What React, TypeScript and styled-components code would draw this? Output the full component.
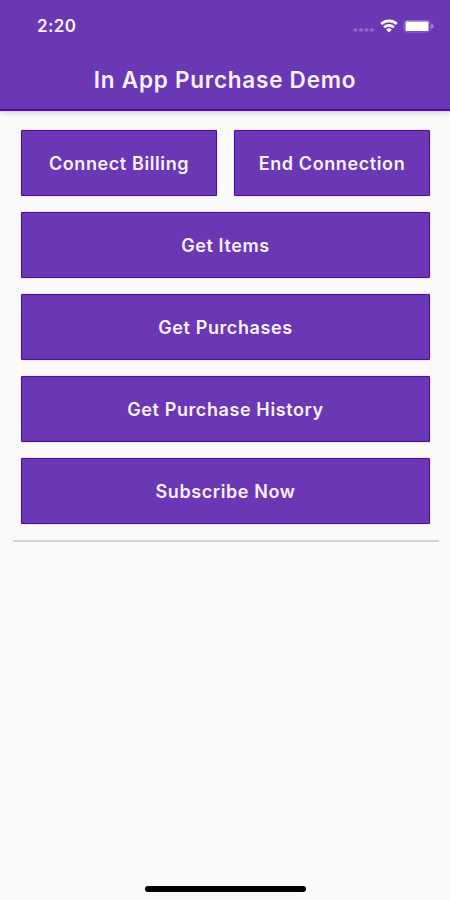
import React from "react";
import styled, { createGlobalStyle } from "styled-components";

const GlobalStyle = createGlobalStyle`
  * { box-sizing: border-box; }
  body { margin: 0; background: #fafafa; }
`;

const Screen = styled.div`
  width: 450px;
  height: 900px;
  display: flex;
  flex-direction: column;
  overflow: hidden;
  background: #fafafa;
  font-family: Inter, "Liberation Sans", sans-serif;
  color: #f8f0ff;
`;

const Header = styled.header`
  height: 111px;
  flex: none;
  background: #6a38b5;
  border-bottom: 2px solid #5409a4;
  box-shadow: 0 1px 1px #e4d2f5, 0 2px 6px rgba(0, 0, 0, 0.15);
`;

const StatusBar = styled.div`
  height: 52px;
  padding: 0 16px 0 37px;
  display: flex;
  align-items: center;
  justify-content: space-between;
`;

const Time = styled.span`
  font-size: 17px;
  line-height: 20px;
  font-weight: 600;
  letter-spacing: 0.4px;
`;

const StatusIcons = styled.svg`
  display: block;
  width: 81px;
  height: 18px;
`;

const Title = styled.h1`
  margin: 0;
  height: 56px;
  line-height: 56px;
  text-align: center;
  font-size: 22.5px;
  font-weight: 600;
  letter-spacing: 0.76px;
`;

const Actions = styled.main`
  display: grid;
  grid-template-columns: 1fr 1fr;
  grid-auto-rows: 66px;
  gap: 16px 17px;
  padding: 19px 20px 0 21px;
`;

const ActionButton = styled.button<{ $wide?: boolean }>`
  grid-column: ${({ $wide }) => ($wide ? "1 / -1" : "auto")};
  padding: 0;
  border: 1px solid #5409a4;
  border-radius: 1px;
  background: #6a38b5;
  box-shadow: 0 0 1px #8a55c8;
  color: inherit;
  font-family: inherit;
  font-size: 18px;
  font-weight: 600;
  letter-spacing: 0.6px;
`;

const Divider = styled.hr`
  flex: none;
  width: 426px;
  height: 2px;
  margin: 16px 0 0 12.5px;
  border: 0;
  background: #d3d3d3;
`;

const HomeIndicator = styled.div`
  width: 161px;
  height: 6px;
  flex: none;
  margin: auto auto 8px 145px;
  border-radius: 3px;
  background: #000;
`;

const actions = [
  { label: "Connect Billing" },
  { label: "End Connection" },
  { label: "Get Items", wide: true },
  { label: "Get Purchases", wide: true },
  { label: "Get Purchase History", wide: true },
  { label: "Subscribe Now", wide: true },
];

export default function App() {
  return (
    <>
      <GlobalStyle />
      <Screen>
        <Header>
          <StatusBar>
            <Time>2:20</Time>
            <StatusIcons viewBox="0 0 81 18" fill="none">
              <g fill="#9468cd">
                <rect x="0.5" y="11.5" width="4" height="3" rx="1" />
                <rect x="6" y="11.5" width="4" height="3" rx="1" />
                <rect x="11.5" y="11.5" width="4" height="3" rx="1" />
                <rect x="17" y="11.5" width="4" height="3" rx="1" />
              </g>
              <g stroke="#fff" strokeWidth="2.7">
                <path d="M28.2 6.9a11.3 11.3 0 0 1 15.6 0" />
                <path d="M31.1 10.4a7 7 0 0 1 9.8 0" />
              </g>
              <path d="M33.2 12.7a4 4 0 0 1 5.6 0L36 15.6z" fill="#fff" />
              <rect x="51" y="3.5" width="26" height="11.5" rx="2.5" stroke="#9468cd" />
              <rect x="52.5" y="4.5" width="23" height="9.5" rx="1" fill="#fff" />
              <path d="M78 6.3q2.8 1 2.8 2.9t-2.8 2.9z" fill="#a27cd5" />
            </StatusIcons>
          </StatusBar>
          <Title>In App Purchase Demo</Title>
        </Header>
        <Actions>
          {actions.map(({ label, wide }) => (
            <ActionButton key={label} $wide={wide}>{label}</ActionButton>
          ))}
        </Actions>
        <Divider />
        <HomeIndicator />
      </Screen>
    </>
  );
}
